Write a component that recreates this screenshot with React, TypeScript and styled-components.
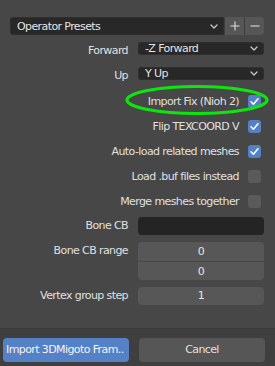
import React from "react";
import styled, { createGlobalStyle } from "styled-components";

const GlobalStyle = createGlobalStyle`
  html, body { margin: 0; padding: 0; background: #474747; }
  body {
    font-family: "DejaVu Sans", "Liberation Sans", sans-serif;
    font-size: 11px;
    letter-spacing: -0.6px;
    color: #e0e0e0;
  }
`;

const Panel = styled.div`
  position: relative;
  width: 275px;
  height: 366px;
  display: flex;
  flex-direction: column;
  background: #474747;
  overflow: hidden;
`;

const Body = styled.div`
  flex: 1;
  display: flex;
  flex-direction: column;
  gap: 7px;
  padding: 17px 11px 0 10px;
`;

const PresetRow = styled.div`
  display: flex;
  height: 18px;
`;

const Dropdown = styled.div<{ $joined?: boolean }>`
  flex: 1;
  display: flex;
  align-items: center;
  justify-content: space-between;
  background: #282828;
  color: #e4e4e4;
  padding: 0 6px 0 7px;
  border-radius: ${(p) => (p.$joined ? "4px 0 0 4px" : "4px")};
  box-shadow: inset 0 0 0 1px #2e2e2e;
  white-space: nowrap;
`;

const IconBtn = styled.div<{ $last?: boolean }>`
  width: 19px;
  display: flex;
  align-items: center;
  justify-content: center;
  background: #565656;
  border-left: 1px solid #3e3e3e;
  border-radius: ${(p) => (p.$last ? "0 4px 4px 0" : "0")};
`;

const Row = styled.div<{ $h?: number }>`
  display: grid;
  grid-template-columns: 1fr 126px;
  column-gap: 10px;
  align-items: start;
  height: ${(p) => p.$h ?? 18}px;
`;

const Label = styled.div`
  height: 18px;
  line-height: 18px;
  text-align: right;
  color: #e0e0e0;
  white-space: nowrap;
`;

const TextField = styled.div`
  height: 18px;
  background: #242424;
  border-radius: 4px;
`;

const NumStack = styled.div`
  display: flex;
  flex-direction: column;
  border-radius: 4px;
  overflow: hidden;
`;

const NumField = styled.div<{ $h?: number; $split?: boolean }>`
  height: ${(p) => p.$h ?? 18}px;
  line-height: ${(p) => p.$h ?? 18}px;
  background: #575757;
  text-align: center;
  color: #e4e4e4;
  border-top: ${(p) => (p.$split ? "1px solid #464646" : "none")};
  box-sizing: border-box;
`;

const SingleNum = styled(NumField)`
  border-radius: 4px;
`;

const CheckRow = styled.div`
  height: 18px;
  display: flex;
  align-items: center;
  justify-content: flex-end;
  gap: 9px;
  padding-right: 3px;
  color: #e0e0e0;
  white-space: nowrap;
`;

const Box = styled.div<{ $on: boolean }>`
  width: 13px;
  height: 13px;
  border-radius: 3px;
  background: ${(p) => (p.$on ? "#5480c4" : "#5a5a5a")};
  display: flex;
  align-items: center;
  justify-content: center;
`;

const Footer = styled.div`
  height: 38px;
  background: #3f3f3f;
  border-top: 1px solid #3b3b3b;
  box-sizing: border-box;
  display: flex;
  gap: 10px;
  padding: 9px 10px 0 3px;
`;

const Button = styled.div<{ $primary?: boolean }>`
  width: 126px;
  height: 24px;
  line-height: 24px;
  border-radius: 4px;
  background: ${(p) => (p.$primary ? "#5581c6" : "#565656")};
  color: ${(p) => (p.$primary ? "#f4f4f4" : "#e0e0e0")};
  text-align: ${(p) => (p.$primary ? "left" : "center")};
  padding: ${(p) => (p.$primary ? "0 0 0 3px" : "0")};
  box-sizing: border-box;
  white-space: nowrap;
  overflow: hidden;
`;

const Highlight = styled.svg`
  position: absolute;
  left: 0;
  top: 0;
  pointer-events: none;
`;

const Chevron = () => (
  <svg width="8" height="5" viewBox="0 0 8 5">
    <path d="M1 1 L4 4 L7 1" fill="none" stroke="#c8c8c8" strokeWidth="1.3" strokeLinecap="round" strokeLinejoin="round" />
  </svg>
);

const Check = () => (
  <svg width="13" height="13" viewBox="0 0 13 13">
    <path d="M3 6.8 L5.4 9.2 L10 3.8" fill="none" stroke="#ffffff" strokeWidth="1.6" strokeLinecap="round" strokeLinejoin="round" />
  </svg>
);

const checks: [string, boolean][] = [
  ["Import Fix (Nioh 2)", true],
  ["Flip TEXCOORD V", true],
  ["Auto-load related meshes", true],
  ["Load .buf files instead", false],
  ["Merge meshes together", false],
];

export default function App() {
  return (
    <Panel>
      <GlobalStyle />
      <Body>
        <PresetRow>
          <Dropdown $joined>
            <span>Operator Presets</span>
            <Chevron />
          </Dropdown>
          <IconBtn>
            <svg width="10" height="10" viewBox="0 0 10 10">
              <path d="M5 0.5 V9.5 M0.5 5 H9.5" stroke="#dcdcdc" strokeWidth="1.1" />
            </svg>
          </IconBtn>
          <IconBtn $last>
            <svg width="10" height="10" viewBox="0 0 10 10">
              <path d="M0.5 5 H9.5" stroke="#dcdcdc" strokeWidth="1.1" />
            </svg>
          </IconBtn>
        </PresetRow>
        <Row>
          <Label>Forward</Label>
          <Dropdown>
            <span>-Z Forward</span>
            <Chevron />
          </Dropdown>
        </Row>
        <Row>
          <Label>Up</Label>
          <Dropdown>
            <span>Y Up</span>
            <Chevron />
          </Dropdown>
        </Row>
        {checks.map(([t, on]) => (
          <CheckRow key={t}>
            <span>{t}</span>
            <Box $on={on}>{on && <Check />}</Box>
          </CheckRow>
        ))}
        <Row>
          <Label>Bone CB</Label>
          <TextField />
        </Row>
        <Row $h={38}>
          <Label>Bone CB range</Label>
          <NumStack>
            <NumField $h={19}>0</NumField>
            <NumField $h={19} $split>0</NumField>
          </NumStack>
        </Row>
        <Row>
          <Label>Vertex group step</Label>
          <SingleNum>1</SingleNum>
        </Row>
      </Body>
      <Footer>
        <Button $primary>Import 3DMigoto Fram..</Button>
        <Button>Cancel</Button>
      </Footer>
      <Highlight width="275" height="366">
        <ellipse cx="197" cy="100" rx="70" ry="13.5" fill="none" stroke="#0ee40e" strokeWidth="3.2" />
      </Highlight>
    </Panel>
  );
}
